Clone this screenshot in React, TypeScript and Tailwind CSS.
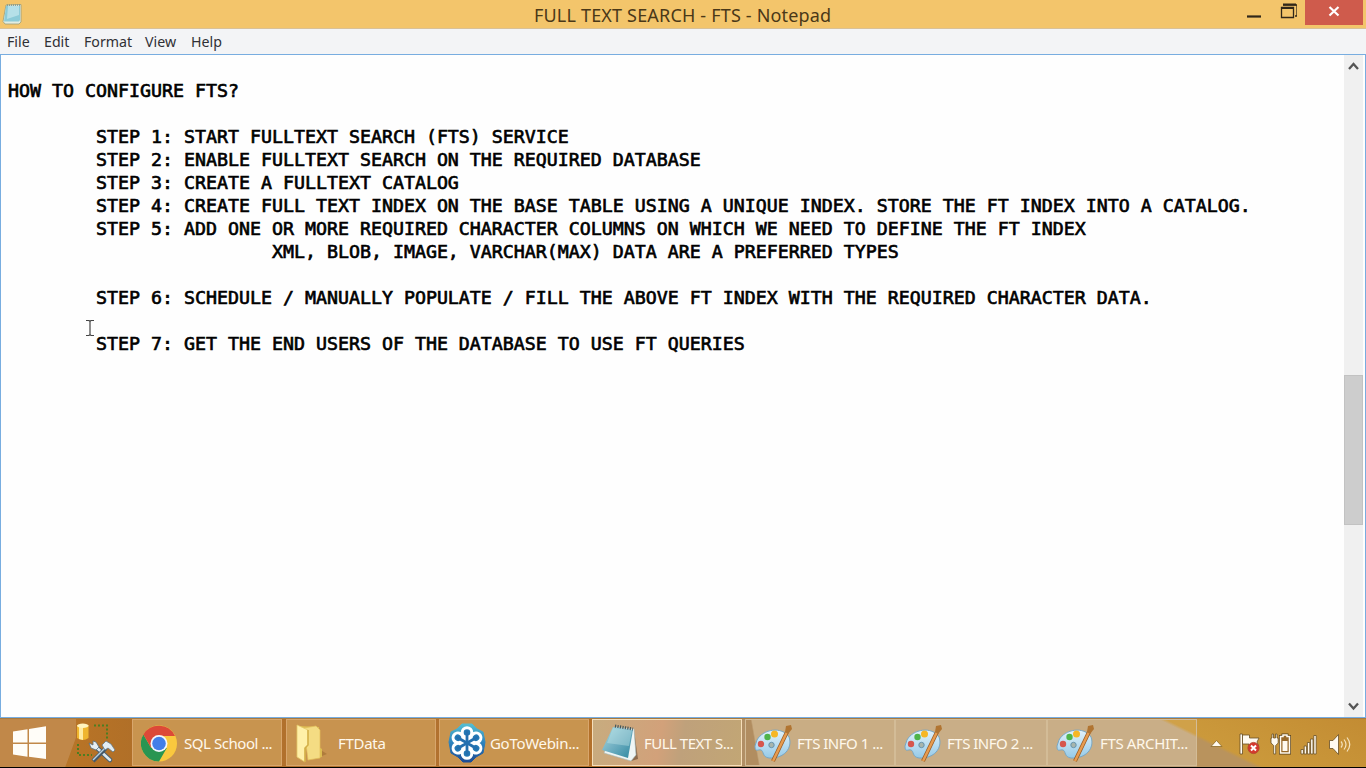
import React from 'react';

const lines: string[] = [
  '',
  'HOW TO CONFIGURE FTS?',
  '',
  '        STEP 1: START FULLTEXT SEARCH (FTS) SERVICE',
  '        STEP 2: ENABLE FULLTEXT SEARCH ON THE REQUIRED DATABASE',
  '        STEP 3: CREATE A FULLTEXT CATALOG',
  '        STEP 4: CREATE FULL TEXT INDEX ON THE BASE TABLE USING A UNIQUE INDEX. STORE THE FT INDEX INTO A CATALOG.',
  '        STEP 5: ADD ONE OR MORE REQUIRED CHARACTER COLUMNS ON WHICH WE NEED TO DEFINE THE FT INDEX',
  '                        XML, BLOB, IMAGE, VARCHAR(MAX) DATA ARE A PREFERRED TYPES',
  '',
  '        STEP 6: SCHEDULE / MANUALLY POPULATE / FILL THE ABOVE FT INDEX WITH THE REQUIRED CHARACTER DATA.',
  '',
  '        STEP 7: GET THE END USERS OF THE DATABASE TO USE FT QUERIES',
];

function NotepadSmall() {
  return (
    <svg width="22" height="22" viewBox="0 0 22 22" className="ml-[2px] mt-[3px] shrink-0">
      <path d="M4 2 19 1.500V19l-2 2H3L1 18.500Z" fill="#e3ede0" stroke="#9b9d78" strokeWidth=".8" />
      <path d="M4 3h14v14l-1 1.500H2Z" fill="#8ccbd8" />
      <path d="M6 3h11v9L5 16Z" fill="#b5e0e8" />
      <path d="M5 2.200h13" stroke="#6f8d8d" strokeWidth="1.200" strokeDasharray="1 1" />
    </svg>
  );
}

function Windows() {
  return (
    <svg width="34" height="34" viewBox="0 0 34 34">
      <path d="M0 5.500 14.500 3.200V16.500H0ZM16 3 33 .300V16.500H16ZM0 18H14.500V30.800L0 28.500ZM16 18H33V33L16 30.800Z" fill="#fffdf8" />
    </svg>
  );
}

function Tools() {
  return (
    <svg width="42" height="42" viewBox="0 0 42 42">
      <path d="M18 3.500H31V17M2 22V33H16" fill="none" stroke="#4c7e22" strokeWidth="2" strokeDasharray="2 2" />
      <path d="M1 3.500V16Q7 20 12.500 16V3.500Z" fill="#efb52e" />
      <path d="M3 5V17L7 18V5Z" fill="#ffeaa0" />
      <ellipse cx="6.800" cy="3.700" rx="5.800" ry="2.200" fill="#fff3bd" />
      <path d="M20 25 34 38" stroke="#4b6070" strokeWidth="4.500" strokeLinecap="round" />
      <path d="M20 25 34 38" stroke="#dce8ee" strokeWidth="2.500" strokeLinecap="round" />
      <path d="M13 21 17 23V19L20 20 23 25 20 28 15 26Z" fill="#e6eef2" stroke="#587080" strokeWidth=".8" />
      <path d="M30 26 17 39" stroke="#465969" strokeWidth="4" />
      <path d="M29 26 17 38" stroke="#b7d0df" strokeWidth="1.500" />
      <path d="m26 23 4-4 5 3 4 6-2 2-5-4-3 2Z" fill="#e2edf4" stroke="#637887" strokeWidth=".8" />
    </svg>
  );
}

function Chrome() {
  return (
    <svg width="36" height="37" viewBox="0 0 36 37" className="shrink-0">
      <circle cx="18" cy="18.500" r="18" fill="#fac83e" />
      <path d="M2.400 9.500A18 18 0 0 0 18 36.500L25.800 23 10.200 23Z" fill="#299552" />
      <path d="M2.400 9.500A18 18 0 0 1 34 11H18L10.200 23Z" fill="#dc4938" />
      <circle cx="18" cy="18.500" r="8.500" fill="#f4f7fc" />
      <circle cx="18" cy="18.500" r="6.800" fill="#427ee8" />
    </svg>
  );
}

function Folder() {
  return (
    <svg width="34" height="39" viewBox="0 0 34 39" className="shrink-0">
      <path d="m18 35 13-5-8-5Z" fill="#895920" opacity=".4" />
      <path d="M3 2 23 3V23l3 2v8l-12 2Z" fill="#ddbd51" />
      <path d="M8 4 20 2l4 4v28l-12 2Z" fill="#f4dc83" stroke="#e3bf59" strokeWidth=".700" />
      <path d="M1 1 12 6V21l-3 3v14L1 33Z" fill="#fff0a8" stroke="#e3c969" strokeWidth=".800" />
      <path d="M12 6v15l-3 3v14" fill="none" stroke="#d3af47" strokeWidth="1.500" />
    </svg>
  );
}

function GoTo() {
  const petals = [0, 60, 120, 180, 240, 300];
  return (
    <svg width="38" height="40" viewBox="0 0 38 40" className="shrink-0">
      <defs>
        <linearGradient id="go" x1="0" y1="0" x2="0" y2="1">
          <stop stopColor="#55bdd0" />
          <stop offset=".5" stopColor="#2c82bd" />
          <stop offset="1" stopColor="#1d4c94" />
        </linearGradient>
      </defs>
      <path d="M14 1h10l5 5 6 3 2 10-2 11-7 4-5 5h-8l-5-5-7-4-2-11 2-10 6-3Z" fill="url(#go)" stroke="url(#go)" strokeLinejoin="round" />
      {petals.map((a) => (
        <g key={a} transform={`rotate(${a} 19 20)`}>
          <circle cx="19" cy="9.500" r="4.800" fill="#2479b5" stroke="#fff" strokeWidth="3" />
        </g>
      ))}
      <circle cx="19" cy="20" r="7.500" fill="#fff" />
      {petals.map((a) => (
        <path key={a} d="M19 16.500V9" transform={`rotate(${a} 19 20)`} stroke="#236fae" strokeWidth="2.800" strokeLinecap="round" />
      ))}
      <circle cx="19" cy="20" r="3" fill="#2370b0" />
    </svg>
  );
}

function Notepad() {
  return (
    <svg width="38" height="38" viewBox="0 0 38 38" className="shrink-0">
      <defs>
        <linearGradient id="note" x1="0" y1="0" x2="1" y2="1">
          <stop stopColor="#a9dce3" />
          <stop offset=".5" stopColor="#70afc2" />
          <stop offset="1" stopColor="#2d879f" />
        </linearGradient>
      </defs>
      <path d="m33 6 4 29-7 2Z" fill="#694b32" opacity=".65" />
      <path d="M14 3 33 5 35 31 30 37 3 29Z" fill="#eff5f4" stroke="#a2b8b8" strokeWidth=".600" />
      <path d="M12 3 32 6 27 34 1 26Z" fill="url(#note)" />
      <path d="m12 4 19 2-3 16-22-3Z" fill="#c3e7e9" opacity=".4" />
      <path d="m14 2 18 3" stroke="#42565b" strokeWidth="3" strokeDasharray="1.200 1.300" />
    </svg>
  );
}

function Palette() {
  return (
    <svg width="39" height="39" viewBox="0 0 39 39" className="shrink-0">
      <defs>
        <linearGradient id="paint" x1="0" y1="0" x2="0" y2="1">
          <stop stopColor="#e2f2fa" />
          <stop offset="1" stopColor="#95cae8" />
        </linearGradient>
      </defs>
      <path d="M3 16C9 5 28 2 35 13C39 24 30 35 15 34C8 33 10 27 7 26C4 25 1 29 1 22Z" fill="url(#paint)" stroke="#79a7c4" strokeWidth="1" />
      <circle cx="7" cy="20" r="3.200" fill="#d6564e" />
      <circle cx="13.500" cy="13" r="3.200" fill="#4eb44a" />
      <circle cx="20.500" cy="10" r="3.500" fill="#f6b725" />
      <circle cx="17.500" cy="21" r="2.700" fill="#a7b5ad" stroke="#6795b0" />
      <path d="M19 37 33 8" stroke="#98591f" strokeWidth="4" />
      <path d="M19 37 33 8" stroke="#e79c50" strokeWidth="2.500" />
      <path d="m31 8 1-6 5-1 1 4-4 5Z" fill="#b17532" />
    </svg>
  );
}

type TaskProps = { icon: React.ReactNode; label: string; box: string; inner: string; text: string };
function Task({ icon, label, box, inner, text }: TaskProps) {
  return (
    <div className={`flex h-[47px] shrink-0 items-center overflow-hidden border pt-px whitespace-nowrap ${box}`}>
      <div className={`flex shrink-0 items-center ${inner}`}>{icon}</div>
      <span className={`text-[15px] text-[#fff8eb] ${text}`}>{label}</span>
    </div>
  );
}

function Tray() {
  return (
    <svg width="142" height="28" viewBox="0 0 142 28" className="ml-[13px] mt-[2px] shrink-0">
      <path d="m1 16.500 5.500-6 5.500 6Z" fill="#fffaf0" stroke="#8c6825" strokeWidth=".800" />
      <g stroke="#684f25" strokeWidth=".800">
        <path d="M30 4h2.500v20H30Z" fill="#fffaf0" />
        <path d="M32.500 5h7v3H49l-2 4 1.500 4H39v-2h-6.500Z" fill="#fffaf0" />
        <circle cx="43.500" cy="18" r="5.600" fill="#d4392e" stroke="#b5452c" />
        <path d="m41 15.500 5 5m0-5-5 5" stroke="#fff" strokeWidth="2" />
        <path d="M62 4h1.500v4h2V4H67v4h1.200v5l-2.500 2.500V24h-2v-8.500L61 13V8h1Z" fill="#fffaf0" />
        <path d="M70.500 6.500h2.500V5h4v1.500h2.500V23h-9Z" fill="none" stroke="#594119" strokeWidth="3" />
        <path d="M70.500 6.500h2.500V5h4v1.500h2.500V23h-9Z" fill="#98692a" stroke="#fffaf0" strokeWidth="1.500" />
        <path d="M72.500 11h5v10h-5Z" fill="#fffaf0" stroke="none" />
        <path d="M91 19.500h2.400V24H91ZM94.200 16h2.400v8h-2.400ZM97.400 12.500h2.400V24h-2.400ZM100.600 9h2.400v15h-2.400ZM103.800 5.500h2.400V24h-2.400Z" fill="#fffaf0" />
        <path d="M119.500 10.500h3.500l5.500-6v20l-5.500-6h-3.500Z" fill="#fffaf0" />
      </g>
      <path d="M131 11.500q2.500 3 0 6M134 9.500q4 5 0 10M137 7.500q5.500 7 0 14" fill="none" stroke="#f5e3be" strokeWidth="1.200" />
    </svg>
  );
}

export default function App() {
  return (
    <div className="flex h-[768px] w-[1366px] flex-col overflow-hidden bg-white font-['Noto_Sans','Open_Sans',sans-serif]">
      <header className="flex h-[29px] shrink-0 border-b border-[#d9c197] bg-[#f3c56b]">
        <NotepadSmall />
        <div className="ml-[510px] w-[320px] text-[18px] leading-[30px] tracking-[0.18px] whitespace-nowrap text-[#4a3818]">FULL TEXT SEARCH - FTS - Notepad</div>
        <svg width="50" height="25" viewBox="0 0 50 25" className="ml-auto mr-[8px]">
          <path d="M0 16.500h14" stroke="#302719" strokeWidth="2.200" />
          <path d="M36 5h14v11h-2M34.500 7.500h12v10h-12Z" fill="none" stroke="#302719" strokeWidth="1.300" />
          <path d="M34 8h13M36 4.500h13" stroke="#302719" strokeWidth="2" />
        </svg>
        <div className="mr-[3px] flex h-[25px] w-[58px] items-center justify-center bg-[#cf5b4c]">
          <svg width="12" height="11" viewBox="0 0 12 11" className="mb-[2px]"><path d="m1.500 1 9 8.500m0-8.500-9 8.500" stroke="#fff" strokeWidth="2.200" /></svg>
        </div>
      </header>
      <nav className="flex h-[25px] shrink-0 bg-[#f3f4f6] pl-[7px] text-[14.2px] leading-[25px] text-[#303035]">
        <span className="w-[37px]">File</span><span className="w-[40px]">Edit</span><span className="w-[61px]">Format</span><span className="w-[46px]">View</span><span>Help</span>
      </nav>
      <main className="relative flex h-[664px] shrink-0 border border-[#78ade0] bg-[#fefefe]">
        <pre className="m-0 w-[1343px] overflow-hidden pt-px pl-[7px] font-['DejaVu_Sans_Mono',monospace] text-[18.28px] leading-[23px] text-black [-webkit-text-stroke:0.65px_black]">
          {lines.map((line, i) => <div key={i} className="h-[23px]">{line}</div>)}
        </pre>
        <div className="flex w-[19px] flex-col items-center bg-[#f0f0f0]">
          <svg width="19" height="22" viewBox="0 0 19 22" className="shrink-0"><path d="m5 14 4.500-5 4.500 5" fill="none" stroke="#555" strokeWidth="2.300" /></svg>
          <div className="mt-[298px] h-[150px] w-[19px] shrink-0 border border-[#c2c2c2] bg-[#cdcdcd]" />
          <svg width="19" height="22" viewBox="0 0 19 22" className="mt-auto shrink-0"><path d="m5 8.500 4.500 5 4.500-5" fill="none" stroke="#555" strokeWidth="2.300" /></svg>
        </div>
        <svg width="10" height="18" viewBox="0 0 10 18" className="absolute left-[84px] top-[264px]">
          <path d="M1 1.500h3l1 1 1-1h3M5 2v14M1 16.500h3l1-1 1 1h3" fill="none" stroke="#444" strokeWidth="1.200" />
        </svg>
      </main>
      <footer className="flex h-[49px] shrink-0 border-t border-[#a77a3f] bg-[linear-gradient(90deg,#bf813d_0%,#b77326_6%,#b06f28_10%,#b27230_30%,#b37029_43%,#a88358_52%,#bea078_58%,#bea078_88%,#c58e32_100%)]">
        <div className="flex w-[76px] items-center bg-[linear-gradient(110deg,#c18849_88%,#b67529_89%)] pl-[13px]"><Windows /></div>
        <div className="flex w-[56px] items-center"><Tools /></div>
        <Task icon={<Chrome />} label="SQL School ..." box="w-[150px] border-[#d8a66c] bg-[#c8944f]" inner="ml-[8px] w-[43px]" text="tracking-[-0.45px]" />
        <Task icon={<Folder />} label="FTData" box="ml-[4px] w-[150px] border-[#d8a66c] bg-[#c8934f]" inner="ml-[9px] w-[42px]" text="tracking-[-0.3px]" />
        <Task icon={<GoTo />} label="GoToWebin..." box="ml-[3px] w-[150px] border-[#d8a66c] bg-[#c8944f]" inner="ml-[8px] w-[42px]" text="tracking-[-0.3px]" />
        <Task icon={<Notepad />} label="FULL TEXT S..." box="ml-[3px] w-[150px] border-[#f6deb9] bg-[linear-gradient(100deg,#c7ac7f,#d2a17a_45%,#bfa17b_60%,#c2a675)]" inner="ml-[8px] w-[43px]" text="tracking-[-0.5px]" />
        <Task icon={<Palette />} label="FTS INFO 1 ..." box="ml-[3px] w-[150px] border-[#d3bc97] bg-[linear-gradient(80deg,#b18d60_8%,#c9ad84_9%)]" inner="ml-[8px] w-[43px]" text="tracking-[-0.5px]" />
        <Task icon={<Palette />} label="FTS INFO 2 ..." box="w-[152px] border-[#d3bc97] bg-[#c9ae87]" inner="ml-[8px] w-[43px]" text="tracking-[-0.5px]" />
        <Task icon={<Palette />} label="FTS ARCHIT..." box="w-[150px] border-[#d3bc97] bg-[linear-gradient(26deg,#c9ae87_85%,#d0a149_88%)]" inner="ml-[8px] w-[44px]" text="tracking-[-0.35px]" />
        <div className="flex min-w-0 flex-1 items-center bg-[linear-gradient(26deg,#b9935d_22%,#cb993b_25%,#c38c33)]"><Tray /></div>
      </footer>
      <div className="h-px shrink-0 bg-black" />
    </div>
  );
}
